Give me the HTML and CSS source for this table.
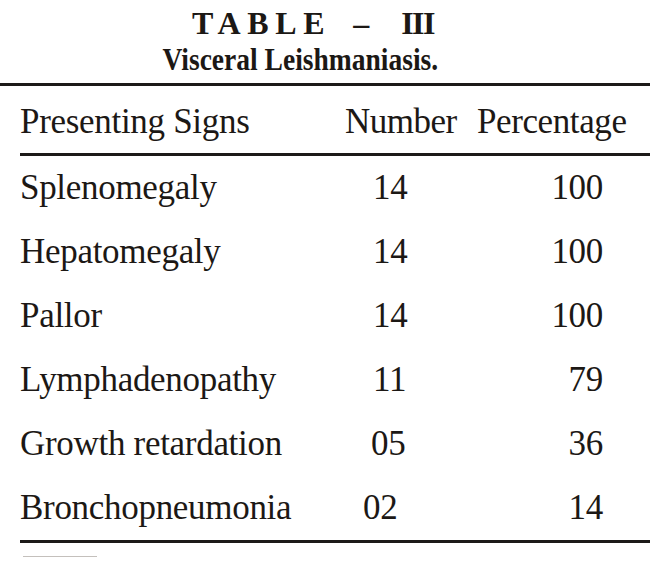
FILE: index.html
```html
<!DOCTYPE html>
<html lang="en">
<head>
<meta charset="utf-8">
<title>TABLE – III Visceral Leishmaniasis</title>
<link rel="stylesheet" href="styles.css">
</head>
<body>
<div class="page">
  <div class="caption">
    <div class="caption-top">
      <span class="caption-word">TABLE</span>
      <span class="caption-dash">–</span>
      <span class="caption-num">III</span>
    </div>
    <div class="caption-sub"><span class="caption-subtext">Visceral Leishmaniasis.</span></div>
  </div>
  <div class="rule-top"></div>
  <div class="table">
    <div class="row head">
      <div class="label">Presenting Signs</div>
      <div class="head-num">Number</div>
      <div class="head-pct">Percentage</div>
    </div>
    <div class="row">
      <div class="label">Splenomegaly</div>
      <div class="num">14</div>
      <div class="pct">100</div>
    </div>
    <div class="row">
      <div class="label">Hepatomegaly</div>
      <div class="num">14</div>
      <div class="pct">100</div>
    </div>
    <div class="row">
      <div class="label">Pallor</div>
      <div class="num">14</div>
      <div class="pct">100</div>
    </div>
    <div class="row">
      <div class="label">Lymphadenopathy</div>
      <div class="num">11</div>
      <div class="pct">79</div>
    </div>
    <div class="row">
      <div class="label">Growth retardation</div>
      <div class="num num-wide">05</div>
      <div class="pct">36</div>
    </div>
    <div class="row last">
      <div class="label">Bronchopneumonia</div>
      <div class="num num-shift">02</div>
      <div class="pct">14</div>
    </div>
  </div>
  <div class="foot-mark"></div>
</div>
</body>
</html>
```
FILE: styles.css
```css
html, body {
  margin: 0;
  padding: 0;
  background: #ffffff;
}

body {
  font-family: "Liberation Serif", "Times New Roman", serif;
  color: #1c1815;
}

.page {
  width: 650px;
  height: 561px;
  overflow: hidden;
}

.caption {
  width: 600px;
  padding-top: 6px;
  font-weight: bold;
  font-size: 32px;
  line-height: 35.5px;
  text-align: center;
}

.caption-top {
  display: flex;
  justify-content: center;
  align-items: baseline;
  padding-left: 26px;
}

.caption-word {
  letter-spacing: 6.6px;
  margin-right: 22px;
}

.caption-dash {
  margin-right: 32px;
}

.caption-num {
  letter-spacing: -1.5px;
}

.caption-sub {
  white-space: nowrap;
}

.caption-subtext {
  display: inline-block;
  transform: scaleX(0.86);
  transform-origin: center;
}

.rule-top {
  margin-top: 6px;
  border-top: 3px solid #1c1a18;
}

.table {
  margin-left: 20px;
  font-size: 35px;
  letter-spacing: -0.3px;
}

.row {
  display: grid;
  grid-template-columns: 325px 132px 150px;
  line-height: 64px;
  white-space: nowrap;
}

.row.head {
  line-height: 63px;
  padding-top: 4px;
  border-bottom: 3px solid #1c1a18;
}

.row.last {
  border-bottom: 3px solid #1c1a18;
}

.head-num {
  letter-spacing: -0.5px;
}

.head-pct {
  letter-spacing: -0.4px;
}

.num {
  padding-left: 28px;
}

.num.num-wide {
  padding-left: 26px;
}

.num.num-shift {
  padding-left: 18px;
}

.pct {
  text-align: right;
  padding-right: 24px;
}

.foot-mark {
  width: 74px;
  margin-left: 23px;
  margin-top: 13px;
  border-top: 1px solid #c4c0bc;
}
```
